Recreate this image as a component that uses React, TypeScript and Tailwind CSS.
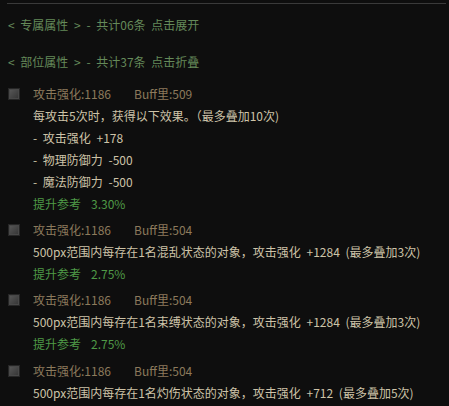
const FONT = { fontFamily: '"Noto Sans CJK SC", "Liberation Sans", sans-serif' }

type Item = {
  power: string
  buff: string
  lines: string[]
  ref?: string
}

const items: Item[] = [
  {
    power: '1186',
    buff: '509',
    lines: ['每攻击5次时，获得以下效果。（最多叠加10次)', '- 攻击强化 +178', '- 物理防御力 -500', '- 魔法防御力 -500'],
    ref: '3.30%',
  },
  {
    power: '1186',
    buff: '504',
    lines: ['500px范围内每存在1名混乱状态的对象，攻击强化 +1284 (最多叠加3次)'],
    ref: '2.75%',
  },
  {
    power: '1186',
    buff: '504',
    lines: ['500px范围内每存在1名束缚状态的对象，攻击强化 +1284 (最多叠加3次)'],
    ref: '2.75%',
  },
  {
    power: '1186',
    buff: '504',
    lines: ['500px范围内每存在1名灼伤状态的对象，攻击强化 +712 (最多叠加5次)'],
  },
]

function Checkbox() {
  return (
    <div className="w-3 h-3 shrink-0 border border-[#262626] bg-gradient-to-br from-[#5a5a5a] to-[#333333] shadow-[inset_0_0_0_1px_#484848]" />
  )
}

export default function App() {
  return (
    <div className="w-[449px] h-[406px] overflow-hidden bg-[#0e0e0e] text-[12px] leading-[22px] whitespace-pre [word-spacing:3px]" style={FONT}>
      <div className="pt-[3px] pr-[3px]">
        <div className="ml-[7px] border-t border-[#3a3a3a]" />
      </div>

      <div className="px-2 pt-[10px] text-[#658a5a]">
        <div>{'< 专属属性 > - 共计06条 点击展开'}</div>
        <div className="mt-[15px]">{'< 部位属性 > - 共计37条 点击折叠'}</div>
      </div>

      <div className="px-2 pt-[10px]">
        {items.map((item, i) => (
          <div key={i} className={i === 0 ? '' : i === 3 ? 'mt-[5px]' : 'mt-1'}>
            <div className="flex items-center text-[#8c7a5c]">
              <Checkbox />
              <span className="ml-[13px] w-[101px]">攻击强化:{item.power}</span>
              <span>Buff里:{item.buff}</span>
            </div>
            <div className="pl-[25px] text-[#cdc3a8]">
              {item.lines.map((l) => (
                <div key={l}>{l}</div>
              ))}
              {item.ref && (
                <div className="text-[#4f9a47]">
                  提升参考<span className="ml-[10px]">{item.ref}</span>
                </div>
              )}
            </div>
          </div>
        ))}
      </div>
    </div>
  )
}
